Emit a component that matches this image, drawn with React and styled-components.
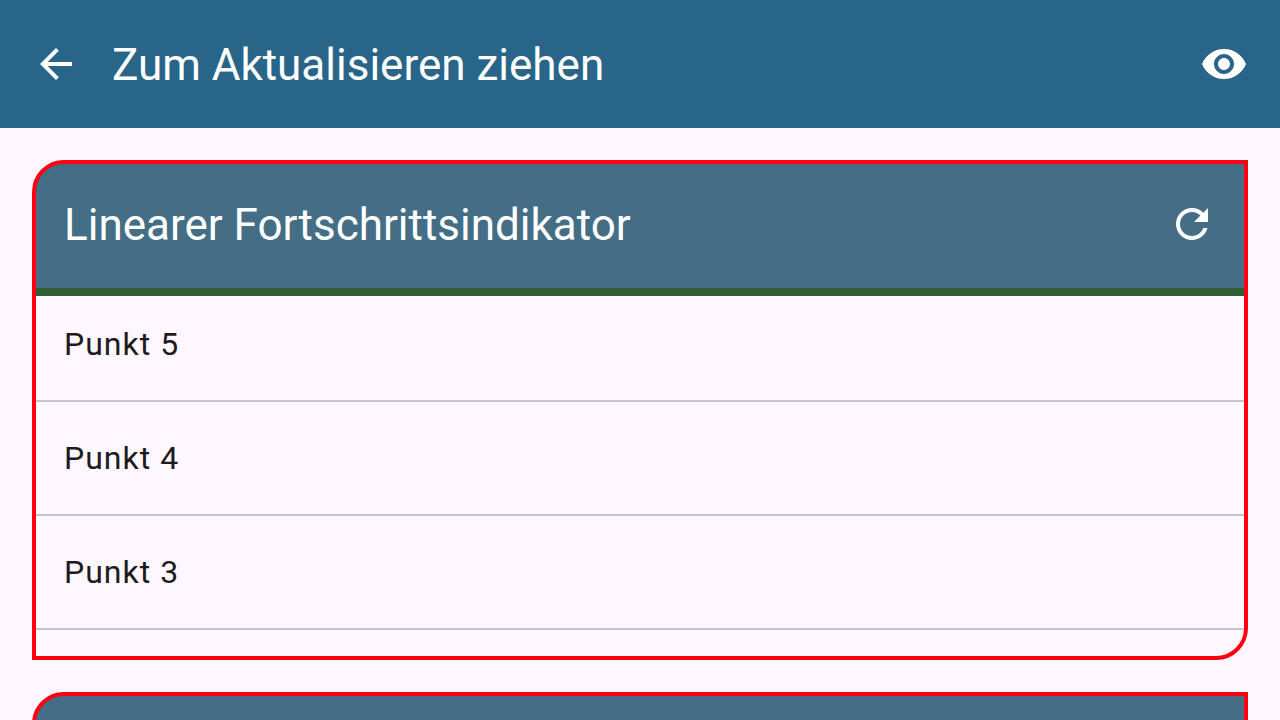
import React from "react";
import styled, { createGlobalStyle } from "styled-components";

const GlobalStyle = createGlobalStyle`
  * { box-sizing: border-box; }
  body {
    margin: 0;
    background: #fef7ff;
    color: #1d1b20;
    font-family: Roboto, sans-serif;
  }
`;

const Screen = styled.div`
  display: flex;
  flex-direction: column;
  height: 100vh;
  overflow: hidden;
`;

const AppBar = styled.header`
  display: flex;
  flex: none;
  align-items: center;
  gap: 32px;
  height: 128px;
  padding: 0 32px;
  background: #286588;
  color: #fff;
`;

const Title = styled.h1`
  flex: 1;
  margin: 0;
  padding-top: 2px;
  font-size: 44px;
  font-weight: 400;
  line-height: 56px;
`;

const IconButton = styled.button`
  display: flex;
  flex: none;
  padding: 0;
  border: 0;
  background: none;
  color: inherit;
  cursor: pointer;
`;

const Icon = styled.svg`
  width: 48px;
  height: 48px;
  fill: currentColor;
`;

const Content = styled.main`
  display: flex;
  flex: 1;
  flex-direction: column;
  gap: 32px;
  min-height: 0;
  padding: 32px;
  overflow: hidden;
`;

const Card = styled.section`
  flex: none;
  height: 500px;
  overflow: hidden;
  border: 4px solid #ff0012;
  border-radius: 32px 0;
  background: linear-gradient(#446d86 124px, #fef7ff 124px) no-repeat;
`;

const CardHeader = styled.div`
  position: relative;
  display: flex;
  align-items: center;
  height: 124px;
  padding: 0 28px 4px;
  color: #fff;
`;

const CardTitle = styled(Title).attrs({ as: "h2" })``;

const Progress = styled.div`
  position: absolute;
  top: 100%;
  left: 0;
  right: 0;
  height: 8px;
  background: #325f31;
`;

const List = styled.ul`
  margin: 0;
  padding: 0;
  list-style: none;
`;

const Item = styled.li`
  display: flex;
  align-items: center;
  height: 114px;
  padding: 0 28px;
  border-bottom: 2px solid #cac4d0;
  font-size: 32px;
  letter-spacing: 1px;
  line-height: 48px;
`;

const items = ["Punkt 5", "Punkt 4", "Punkt 3"];

export default function App() {
  return (
    <>
      <GlobalStyle />
      <Screen>
        <AppBar>
          <IconButton type="button" aria-label="Zurück">
            <Icon viewBox="0 0 24 24" aria-hidden="true">
              <path d="M20 11H7.83l5.59-5.59L12 4l-8 8 8 8 1.41-1.41L7.83 13H20v-2z" />
            </Icon>
          </IconButton>
          <Title>Zum Aktualisieren ziehen</Title>
          <IconButton type="button" aria-label="Ansicht">
            <Icon viewBox="0 0 24 24" aria-hidden="true">
              <path d="M12 4.5C7 4.5 2.73 7.61 1 12c1.73 4.39 6 7.5 11 7.5s9.27-3.11 11-7.5c-1.73-4.39-6-7.5-11-7.5zM12 17c-2.76 0-5-2.24-5-5s2.24-5 5-5 5 2.24 5 5-2.24 5-5 5zm0-8c-1.66 0-3 1.34-3 3s1.34 3 3 3 3-1.34 3-3-1.34-3-3-3z" />
            </Icon>
          </IconButton>
        </AppBar>
        <Content>
          <Card>
            <CardHeader>
              <CardTitle>Linearer Fortschrittsindikator</CardTitle>
              <IconButton type="button" aria-label="Aktualisieren">
                <Icon viewBox="0 0 24 24" aria-hidden="true">
                  <path d="M17.65 6.35C16.2 4.9 14.21 4 12 4c-4.42 0-7.99 3.58-7.99 8s3.57 8 7.99 8c3.73 0 6.84-2.55 7.73-6h-2.08c-.82 2.33-3.04 4-5.65 4-3.31 0-6-2.69-6-6s2.69-6 6-6c1.66 0 3.14.69 4.22 1.78L13 11h7V4l-2.35 2.35z" />
                </Icon>
              </IconButton>
              <Progress role="progressbar" aria-label="Wird aktualisiert" />
            </CardHeader>
            <List>
              {items.map((item) => (
                <Item key={item}>{item}</Item>
              ))}
            </List>
          </Card>
          <Card>
            <CardHeader />
          </Card>
        </Content>
      </Screen>
    </>
  );
}
